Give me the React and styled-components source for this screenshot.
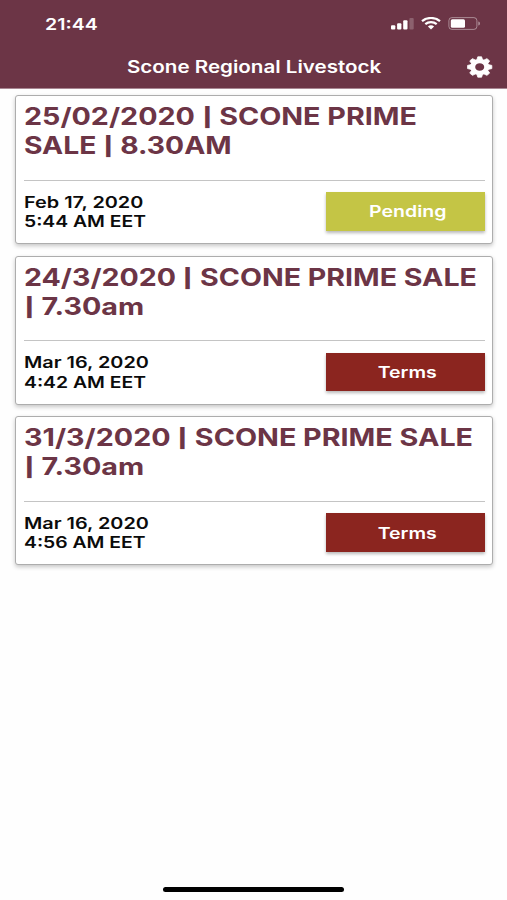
import React from 'react';
import styled, { createGlobalStyle } from 'styled-components';

const GlobalStyle = createGlobalStyle`
  body {
    margin: 0;
    background-color: #fefefe;
    font-family: Inter, 'Liberation Sans', sans-serif;
  }
`;
const Screen = styled.div`
  width: 507px;
  height: 900px;
  display: flex;
  flex-direction: column;
  overflow: hidden;
`;
const Header = styled.header`
  height: 88px;
  flex-shrink: 0;
  background-color: #6c3546;
  border-bottom: 1px solid #a88692;
  color: #fff;
`;
const StatusBar = styled.div`
  height: 46px;
  padding: 1px 26px 0 44.5px;
  box-sizing: border-box;
  display: flex;
  justify-content: space-between;
  align-items: center;
`;
const StatusIcons = styled.div`
  display: flex;
  align-items: center;
  gap: 7px;
`;
const NavBar = styled.div`
  height: 42px;
  padding: 0 14px;
  display: grid;
  grid-template-columns: 27px 1fr 26px;
  align-items: center;
`;
// wide lettering, widened from the given edge
const Wide = styled.span`
  display: inline-block;
  white-space: nowrap;
  transform: scaleX(${({ $scale }) => $scale || 1.22});
  transform-origin: ${({ $from }) => $from || 'left'} center;
`;
const Time = styled(Wide)`
  font-size: 16px;
  font-weight: 600;
`;
const NavTitle = styled.h1`
  margin: 0;
  text-align: center;
  font-size: 17px;
  line-height: 20px;
  font-weight: 600;
`;
const SaleList = styled.main`
  padding: 6px 14.5px 0 15px;
  display: flex;
  flex-direction: column;
  gap: 11.7px;
`;
const Card = styled.article`
  height: 149px;
  box-sizing: border-box;
  padding: 6px 7px 0 8px;
  background-color: #fff;
  border: 1px solid #adadad;
  border-radius: 3px;
  box-shadow: 0 2px 4px rgba(0, 0, 0, 0.22);
`;
const SaleTitle = styled.h2`
  margin: 0;
  height: 78.5px;
  box-sizing: border-box;
  display: flex;
  flex-direction: column;
  align-items: flex-start;
  border-bottom: 1.5px solid #c4c4c4;
  color: #6c3546;
  font-size: 24px;
  line-height: 29px;
  font-weight: 660;
`;
const TitleLine = styled(Wide)`
  white-space: pre;
`;
// short bar, no taller than the capitals beside it
const Pipe = styled.span`
  display: inline-block;
  transform: translateY(1px) scale(1.1, 0.77);
`;
const CardFooter = styled.div`
  padding-top: 11.5px;
  display: flex;
  justify-content: space-between;
  align-items: flex-start;
`;
const SaleDate = styled.div`
  padding-top: 0.5px;
  display: flex;
  flex-direction: column;
  color: #0b0b0b;
  font-size: 16px;
  line-height: 19.4px;
  font-weight: 600;
`;
const StatusButton = styled.button`
  width: 159px;
  height: 38.5px;
  padding: 0 0 0 5px;
  border: none;
  background-color: ${({ $pending }) => ($pending ? '#c4c545' : '#8b251f')};
  box-shadow: 0 2px 3px rgba(0, 0, 0, 0.28);
  color: #fff;
  font-family: inherit;
  font-size: 16px;
  font-weight: 600;
`;
const HomeArea = styled.footer`
  margin-top: auto;
  padding-bottom: 8px;
  display: flex;
  justify-content: center;
`;
const HomeIndicator = styled.div`
  width: 181px;
  height: 5px;
  border-radius: 3px;
  background-color: #000;
`;

const sales = [
  {
    lines: [
      { before: '25/02/2020 ', after: ' SCONE PRIME', scale: 1.195 },
      { before: 'SALE ', after: ' 8.30AM', scale: 1.178 },
    ],
    date: 'Feb 17, 2020',
    time: '5:44 AM EET',
    status: 'Pending',
  },
  {
    lines: [
      { before: '24/3/2020 ', after: ' SCONE PRIME SALE', scale: 1.19 },
      { before: '', after: ' 7.30am', scale: 1.195 },
    ],
    date: 'Mar 16, 2020',
    time: '4:42 AM EET',
    status: 'Terms',
  },
  {
    lines: [
      { before: '31/3/2020 ', after: ' SCONE PRIME SALE', scale: 1.196 },
      { before: '', after: ' 7.30am', scale: 1.195 },
    ],
    date: 'Mar 16, 2020',
    time: '4:56 AM EET',
    status: 'Terms',
  },
];

function SignalIcon() {
  return (
    <svg width='23' height='13' viewBox='0 0 23 13' fill='#fff'>
      <rect x='0' y='8.3' width='4.3' height='4.2' rx='1' />
      <rect x='6.1' y='6.3' width='4.3' height='6.2' rx='1' />
      <rect x='12.2' y='3.2' width='4.3' height='9.3' rx='1' />
      <rect x='18.4' y='1' width='4.3' height='11.5' rx='1' opacity='0.22' />
    </svg>
  );
}

function WifiIcon() {
  return (
    <svg width='20' height='13' viewBox='0 0 20 13' fill='none' stroke='#fff' strokeWidth='2.2'>
      <path d='M1 4.2C6-.1 14-.1 19 4.2' />
      <path d='M4.3 7.2c3.3-2.8 8.1-2.8 11.4 0' />
      <path d='M6.9 9.4c1.8-1.5 4.4-1.5 6.2 0L10 12.4z' fill='#fff' stroke='none' />
    </svg>
  );
}

function BatteryIcon() {
  return (
    <svg width='33' height='13' viewBox='0 0 33 13'>
      <rect x='0.9' y='0.6' width='28' height='11.8' rx='3' fill='none' stroke='#fff' strokeOpacity='0.42' />
      <rect x='2.8' y='2.2' width='14.2' height='8.6' rx='1.5' fill='#fff' />
      <path d='M30.4 4.5c2 .6 2 3.4 0 4z' fill='#fff' fillOpacity='0.5' />
    </svg>
  );
}

function GearIcon() {
  return (
    <svg width='26' height='22' viewBox='0 0 26 22' preserveAspectRatio='none' fill='none' stroke='#fff'>
      <g transform='translate(12.7 11) scale(1.19 1)'>
        <circle r='5.9' strokeWidth='4.2' />
        {[0, 45, 90, 135, 180, 225, 270, 315].map((angle) => (
          <path
            key={angle}
            d='M-2.4-7.2L-1.6-10.2H1.6L2.4-7.2z'
            fill='#fff'
            strokeWidth='0.7'
            strokeLinejoin='round'
            transform={`rotate(${angle})`}
          />
        ))}
      </g>
    </svg>
  );
}

export default function App() {
  return (
    <Screen>
      <GlobalStyle />
      <Header>
        <StatusBar>
          <Time>21:44</Time>
          <StatusIcons>
            <SignalIcon />
            <WifiIcon />
            <BatteryIcon />
          </StatusIcons>
        </StatusBar>
        <NavBar>
          <span />
          <NavTitle>
            <Wide $from='center' $scale={1.21}>Scone Regional Livestock</Wide>
          </NavTitle>
          <GearIcon />
        </NavBar>
      </Header>
      <SaleList>
        {sales.map((sale) => (
          <Card key={sale.time}>
            <SaleTitle>
              {sale.lines.map((line) => (
                <TitleLine key={line.after} $scale={line.scale}>
                  {line.before}
                  <Pipe>|</Pipe>
                  {line.after}
                </TitleLine>
              ))}
            </SaleTitle>
            <CardFooter>
              <SaleDate>
                <Wide $scale={1.24}>{sale.date}</Wide>
                <Wide $scale={1.21}>{sale.time}</Wide>
              </SaleDate>
              <StatusButton $pending={sale.status === 'Pending'}>
                <Wide $from='center'>{sale.status}</Wide>
              </StatusButton>
            </CardFooter>
          </Card>
        ))}
      </SaleList>
      <HomeArea>
        <HomeIndicator />
      </HomeArea>
    </Screen>
  );
}
